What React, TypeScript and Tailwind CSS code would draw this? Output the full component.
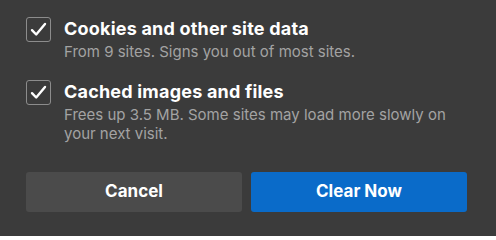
import React from 'react';

const font = { fontFamily: 'Inter, "Liberation Sans", sans-serif' };

function Check() {
  return (
    <div className="flex-shrink-0 w-[25px] h-[25px] rounded-[3px] border border-[#8c8c8c] flex items-center justify-center">
      <svg width="17" height="15" viewBox="0 0 17 15" fill="none">
        <path d="M2 8.2 L6.2 12.5 L15 2" stroke="#ffffff" strokeWidth="2.4" strokeLinecap="round" strokeLinejoin="round" />
      </svg>
    </div>
  );
}

interface OptionProps {
  title: string;
  desc: string;
}

function Option({ title, desc }: OptionProps) {
  return (
    <div className="flex gap-[13px]">
      <Check />
      <div className="flex-1">
        <div className="text-[18px] leading-[24px] font-bold tracking-[0.2px] text-white">{title}</div>
        <div className="text-[15px] leading-[19px] mt-[1px] text-[#a3a3a3]">{desc}</div>
      </div>
    </div>
  );
}

export default function App() {
  return (
    <div className="w-[496px] h-[236px] bg-[#3b3b3b] pl-[26px] pr-[29px] pt-[17px]" style={font}>
      <div className="flex flex-col gap-[19px] pr-[8px]">
        <Option title="Cookies and other site data" desc="From 9 sites. Signs you out of most sites." />
        <Option
          title="Cached images and files"
          desc="Frees up 3.5 MB. Some sites may load more slowly on your next visit."
        />
      </div>
      <div className="flex gap-[9px] mt-[29px]">
        <button className="flex-1 h-[40px] rounded-[3px] bg-[#4b4b4b] text-white text-[17px] font-bold">Cancel</button>
        <button className="flex-1 h-[40px] rounded-[3px] bg-[#0a6bc9] text-white text-[17px] font-bold">Clear Now</button>
      </div>
    </div>
  );
}
